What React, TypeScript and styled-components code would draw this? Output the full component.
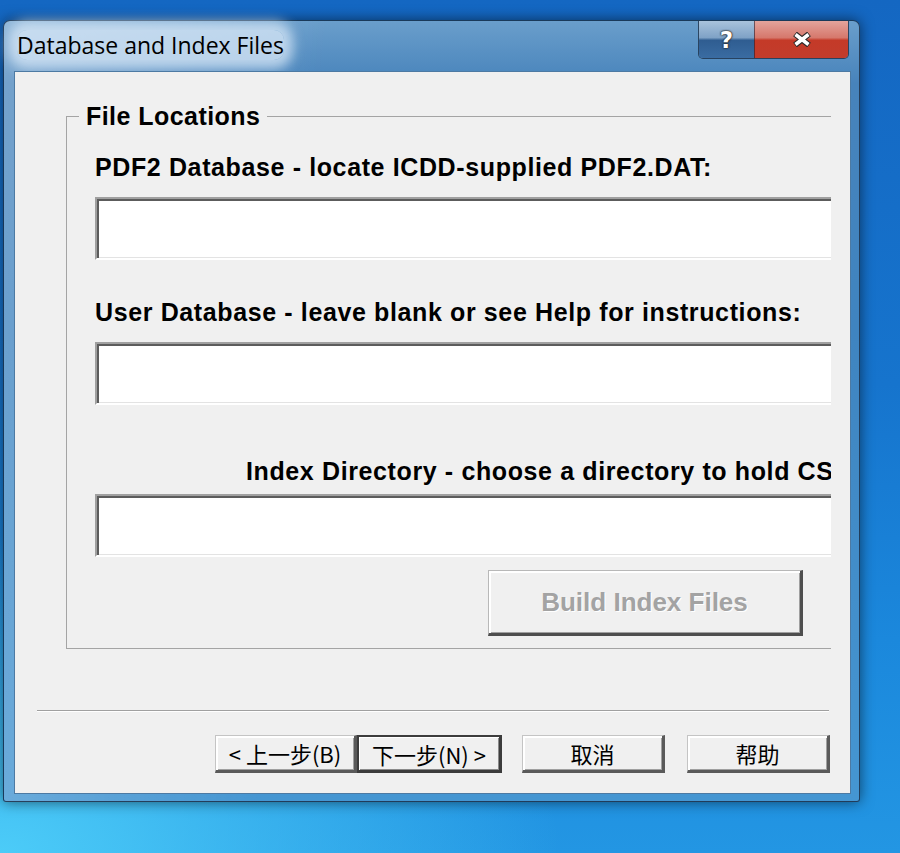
import React from "react";
import styled, { createGlobalStyle } from "styled-components";

const GlobalStyle = createGlobalStyle`
  html, body {
    margin: 0;
    padding: 0;
  }
  body {
    width: 900px;
    height: 853px;
    overflow: hidden;
    font-family: "Liberation Sans", Arial, sans-serif;
  }
`;

const Desktop = styled.div`
  width: 900px;
  height: 853px;
  box-sizing: border-box;
  padding: 20px 0 0 3px;
  overflow: hidden;
  background:
    radial-gradient(ellipse 560px 320px at 0% 100%, rgba(76, 204, 248, 1) 0%, rgba(60, 190, 240, 0) 100%),
    linear-gradient(180deg, #1467c2 0%, #1674cd 45%, #1b88dc 75%, #2396e3 100%);
`;

const Window = styled.div`
  width: 857px;
  height: 782px;
  box-sizing: border-box;
  display: flex;
  flex-direction: column;
  border: 1px solid rgba(15, 35, 60, 0.8);
  border-radius: 7px 7px 3px 3px;
  background:
    linear-gradient(95deg, rgba(255, 255, 255, 0.25) 0%, rgba(255, 255, 255, 0) 35%),
    linear-gradient(180deg, #6a9ecb 0%, #4783bb 8%, #3f84c0 40%, #4596d2 100%);
  box-shadow: 0 0 14px rgba(0, 0, 0, 0.55);
`;

const TitleBar = styled.div`
  height: 51px;
  flex-shrink: 0;
  display: flex;
  align-items: flex-start;
  justify-content: space-between;
  padding: 0 10px 0 13px;
`;

const TitleText = styled.span`
  margin-top: 9px;
  font-family: "Open Sans", "Noto Sans", sans-serif;
  font-size: 23px;
  line-height: 30px;
  color: #000;
  background: rgba(222, 236, 249, 0.72);
  border-radius: 10px;
  box-shadow: 0 0 12px 9px rgba(222, 236, 249, 0.72);
`;

const Captions = styled.div`
  display: flex;
  height: 37px;
  border: 1px solid rgba(20, 35, 55, 0.7);
  border-top: none;
  border-radius: 0 0 5px 5px;
  overflow: hidden;
`;

const CaptionButton = styled.div<{ $w: number; $close?: boolean }>`
  width: ${(p) => p.$w}px;
  display: flex;
  align-items: center;
  justify-content: center;
  background: ${(p) =>
    p.$close
      ? "linear-gradient(180deg, #e4a49c 0%, #d6786c 45%, #c43a28 52%, #c23c2c 100%)"
      : "linear-gradient(180deg, #a9c3dc 0%, #7fa2c6 45%, #2f5d91 52%, #3a6ca2 100%)"};
  border-left: ${(p) => (p.$close ? "1px solid rgba(30, 30, 50, 0.6)" : "none")};
  color: #fff;
  font-family: "DejaVu Sans", sans-serif;
  font-weight: bold;
  font-size: 23px;
  text-shadow: 0 0 1px #222, 0 0 2px #222, 0 0 2px #333;
`;

const Client = styled.div`
  margin-left: 11px;
  width: 835px;
  height: 721px;
  flex-shrink: 0;
  display: flex;
  flex-direction: column;
  background: #f0f0f0;
  box-shadow: 0 0 0 1px #4d7aa3;
`;

const PageClip = styled.div`
  width: 816px;
  height: 588px;
  flex-shrink: 0;
  overflow: hidden;
`;

const GroupBox = styled.fieldset`
  display: block;
  margin: 31px 0 0 51px;
  width: 800px;
  min-width: 0;
  box-sizing: border-box;
  padding: 0;
  border: 1px solid #a4a4a4;
`;

const Legend = styled.legend`
  margin-left: 12px;
  padding: 0 7px;
  font-weight: bold;
  font-size: 25px;
  line-height: 26px;
  letter-spacing: 0.45px;
  color: #000;
`;

const GroupContent = styled.div`
  display: flex;
  flex-direction: column;
  padding: 23px 20px 12px 28px;
`;

const FieldLabel = styled.div<{ $top: number; $indent?: number }>`
  margin-top: ${(p) => p.$top}px;
  padding-left: ${(p) => p.$indent || 0}px;
  font-weight: bold;
  font-size: 25px;
  line-height: 30px;
  letter-spacing: 0.62px;
  color: #000;
  white-space: nowrap;
`;

const TextBox = styled.input<{ $top: number }>`
  margin-top: ${(p) => p.$top}px;
  height: 63px;
  box-sizing: border-box;
  appearance: none;
  outline: none;
  background: #fff;
  border-style: solid;
  border-width: 2px;
  border-color: #a0a0a0 #fff #fff #a0a0a0;
  box-shadow: inset 2px 2px 0 #5c5c5c, inset -1px -1px 0 #e3e3e3;
`;

const BuildButton = styled.button`
  align-self: flex-end;
  margin: 13px 42px 0 0;
  width: 315px;
  height: 66px;
  box-sizing: border-box;
  background: #f0f0f0;
  border-style: solid;
  border-width: 1px 3px 3px 1px;
  border-color: #b8b8b8 #4e4e4e #4e4e4e #b8b8b8;
  box-shadow: inset 2px 2px 0 #fff, inset -1px -1px 0 #a0a0a0;
  font-family: "Liberation Sans", Arial, sans-serif;
  font-weight: bold;
  font-size: 26px;
  color: #a3a3a3;
  text-shadow: 1px 1px 0 #fff;
  padding: 0;
`;

const Separator = styled.div`
  margin: 50px 21px 0 22px;
  border-top: 1px solid #a0a0a0;
  border-bottom: 1px solid #fff;
`;

const ButtonRow = styled.div`
  display: flex;
  justify-content: flex-end;
  margin-top: 23px;
  padding-right: 20px;
  height: 38px;
`;

const WizardButton = styled.button<{ $w: number; $gap?: number; $default?: boolean }>`
  width: ${(p) => p.$w}px;
  margin-left: ${(p) => p.$gap || 0}px;
  height: 38px;
  box-sizing: border-box;
  padding: 0;
  background: #f0f0f0;
  border-style: solid;
  border-width: ${(p) => (p.$default ? "2px 3px 3px 2px" : "1px 3px 3px 1px")};
  border-color: ${(p) =>
    p.$default ? "#3c3c3c" : "#c4c4c4 #5a5a5a #5a5a5a #c4c4c4"};
  box-shadow: ${(p) =>
    p.$default
      ? "inset 1px 1px 0 #fff, inset -1px -1px 0 #8a8a8a"
      : "inset 2px 2px 0 #fff, inset -1px -1px 0 #a0a0a0"};
  font-family: "Noto Sans CJK SC", "Liberation Sans", sans-serif;
  font-size: 22px;
  line-height: 30px;
  color: #000;
`;

function CloseGlyph() {
  return (
    <svg width="20" height="15" viewBox="0 0 20 15">
      <path d="M3 2 L17 13 M17 2 L3 13" stroke="#2a2a2a" strokeWidth="6" fill="none" />
      <path d="M3.5 2.5 L16.5 12.5 M16.5 2.5 L3.5 12.5" stroke="#fff" strokeWidth="3.6" fill="none" />
    </svg>
  );
}

export default function App() {
  return (
    <>
      <GlobalStyle />
      <Desktop>
        <Window>
          <TitleBar>
            <TitleText>Database and Index Files</TitleText>
            <Captions>
              <CaptionButton $w={55}>?</CaptionButton>
              <CaptionButton $w={93} $close>
                <CloseGlyph />
              </CaptionButton>
            </Captions>
          </TitleBar>
          <Client>
            <PageClip>
              <GroupBox>
                <Legend>File Locations</Legend>
                <GroupContent>
                  <FieldLabel $top={0}>PDF2 Database - locate ICDD-supplied PDF2.DAT:</FieldLabel>
                  <TextBox $top={15} readOnly />
                  <FieldLabel $top={37}>User Database - leave blank or see Help for instructions:</FieldLabel>
                  <TextBox $top={15} readOnly />
                  <FieldLabel $top={51} $indent={151}>
                    Index Directory - choose a directory to hold CSI index files:
                  </FieldLabel>
                  <TextBox $top={8} readOnly />
                  <BuildButton disabled>Build Index Files</BuildButton>
                </GroupContent>
              </GroupBox>
            </PageClip>
            <Separator />
            <ButtonRow>
              <WizardButton $w={142}>&lt; 上一步(B)</WizardButton>
              <WizardButton $w={145} $default>下一步(N) &gt;</WizardButton>
              <WizardButton $w={143} $gap={20}>取消</WizardButton>
              <WizardButton $w={143} $gap={22}>帮助</WizardButton>
            </ButtonRow>
          </Client>
        </Window>
      </Desktop>
    </>
  );
}
